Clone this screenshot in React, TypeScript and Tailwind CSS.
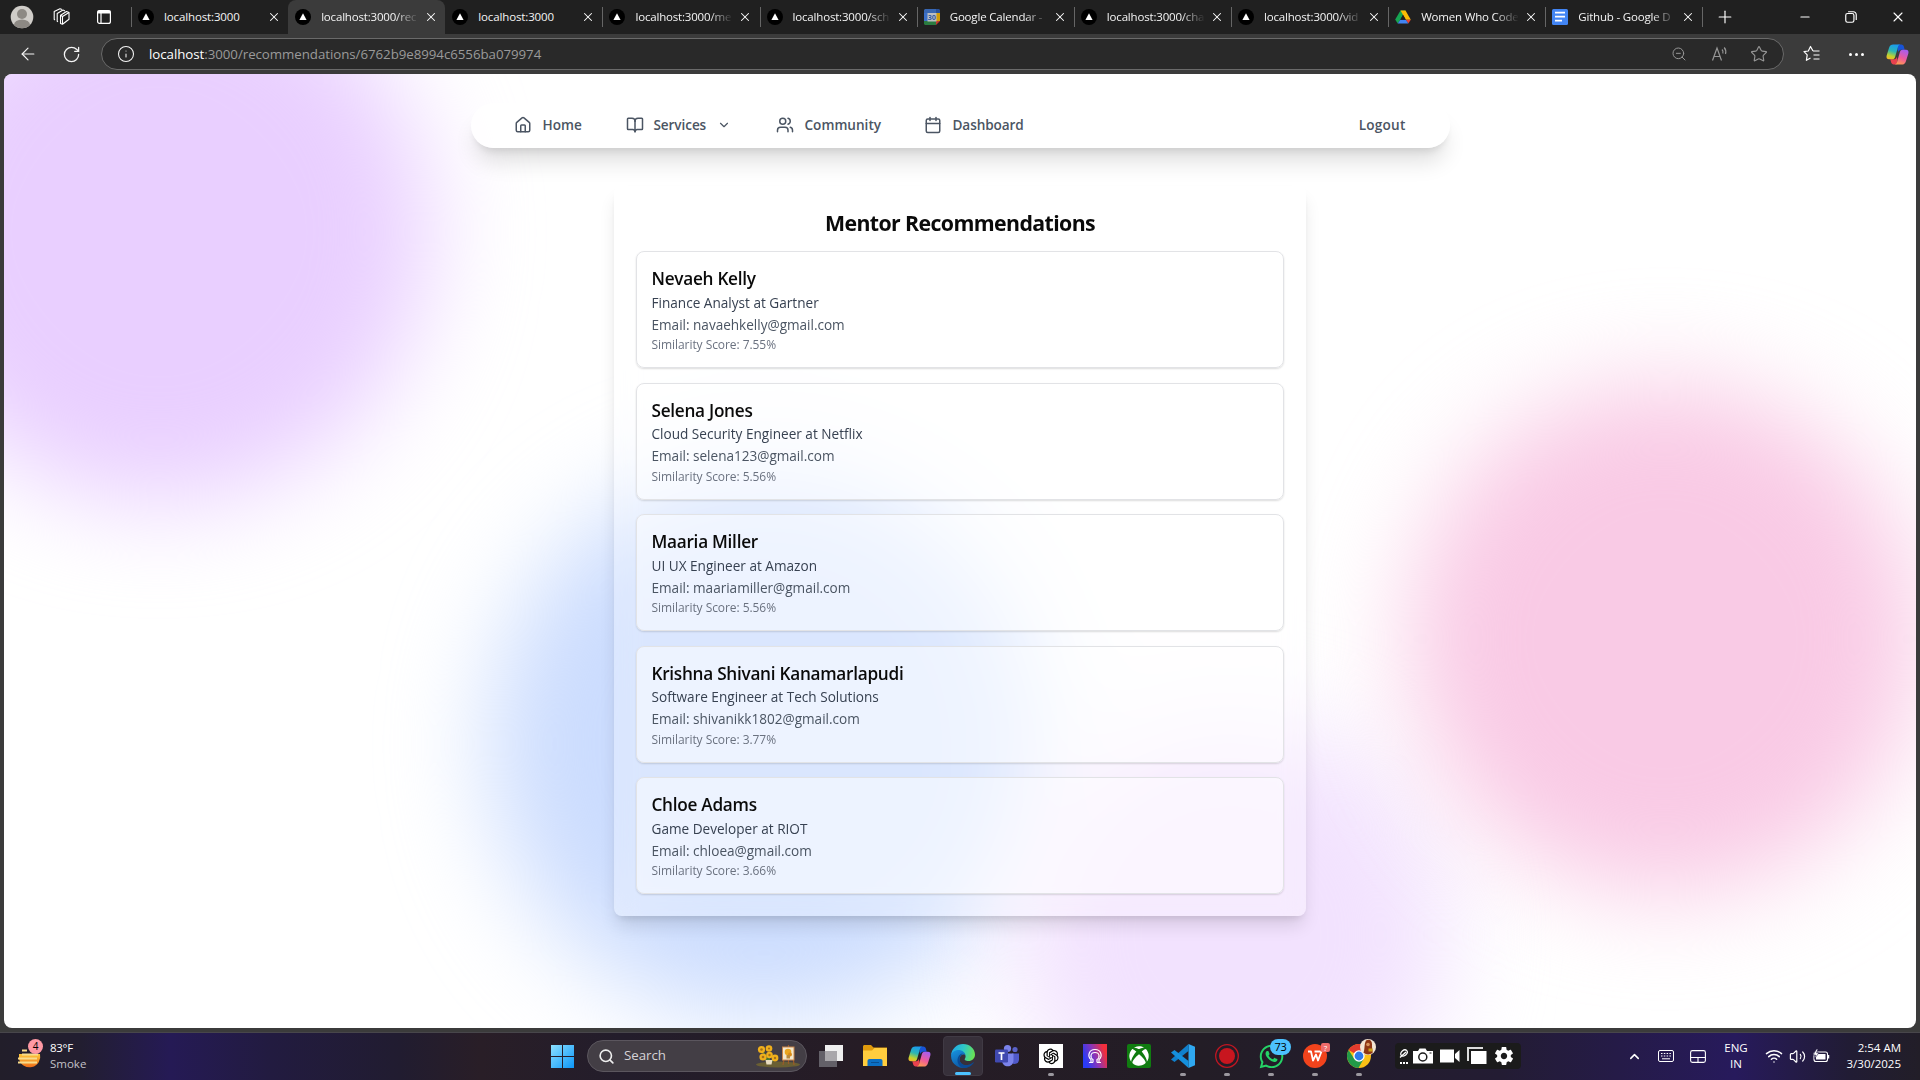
import React from "react";
import {
  House,
  BookOpen,
  ChevronDown,
  ChevronUp,
  Users,
  Calendar,
  ArrowLeft,
  RotateCw,
  Info,
  ZoomOut,
  Star,
  Search,
  X,
  Plus,
  Minus,
  Wifi,
  Volume2,
} from "lucide-react";
import { FaXbox, FaWhatsapp } from "react-icons/fa";
import { AiOutlineOpenAI } from "react-icons/ai";
import { IoMdSettings } from "react-icons/io";

type Favicon = "next" | "calendar" | "drive" | "docs";

const tabs: { title: string; icon: Favicon; active?: boolean; noLine?: boolean }[] = [
  { title: "localhost:3000", icon: "next" },
  { title: "localhost:3000/rec", icon: "next", active: true, noLine: true },
  { title: "localhost:3000", icon: "next", noLine: true },
  { title: "localhost:3000/me", icon: "next" },
  { title: "localhost:3000/sch", icon: "next" },
  { title: "Google Calendar -", icon: "calendar" },
  { title: "localhost:3000/cha", icon: "next" },
  { title: "localhost:3000/vid", icon: "next" },
  { title: "Women Who Code", icon: "drive" },
  { title: "Github - Google D", icon: "docs" },
];

const mentors = [
  { name: "Nevaeh Kelly", role: "Finance Analyst at Gartner", email: "navaehkelly@gmail.com", score: "7.55%" },
  { name: "Selena Jones", role: "Cloud Security Engineer at Netflix", email: "selena123@gmail.com", score: "5.56%" },
  { name: "Maaria Miller", role: "UI UX Engineer at Amazon", email: "maariamiller@gmail.com", score: "5.56%" },
  { name: "Krishna Shivani Kanamarlapudi", role: "Software Engineer at Tech Solutions", email: "shivanikk1802@gmail.com", score: "3.77%" },
  { name: "Chloe Adams", role: "Game Developer at RIOT", email: "chloea@gmail.com", score: "3.66%" },
];

function TabIcon({ kind }: { kind: Favicon }) {
  if (kind === "calendar")
    return (
      <svg viewBox="0 0 16 16" className="size-4 opacity-80">
        <path d="M1 0h11v4H0V1z" fill="#3f79d8" />
        <path d="M12 0h3l1 1v3h-4z" fill="#2a5db5" />
        <path d="M0 4h4v8H0z" fill="#4285f4" />
        <path d="M12 4h4v8h-4z" fill="#fbbc04" />
        <path d="M0 12h12v4H1l-1-1z" fill="#2d9249" />
        <path d="M12 12h4l-4 4z" fill="#ea4335" />
        <path d="M3.500 4h9v8.500h-9z" fill="#e4e6ea" />
        <text x="8" y="10.800" textAnchor="middle" fontSize="7" fontWeight="700" fill="#3267c8" fontFamily="Open Sans">30</text>
      </svg>
    );
  if (kind === "drive")
    return (
      <svg viewBox="0 0 16 16" className="size-4">
        <path d="M5.500 1.500h5L5.300 10.800 2.700 14.500.2 10.600z" fill="#16a552" />
        <path d="M5.500 1.500h5l5.300 9.200h-5z" fill="#fbbc04" />
        <path d="M15.800 10.700 13.300 14.500l-2.600-3.800z" fill="#ea4335" />
        <path d="M5.300 10.700h5.500l2.500 3.900H2.700z" fill="#4285f4" />
        <path d="M8 5.800 5.300 10.700h5.500z" fill="#202020" />
      </svg>
    );
  if (kind === "docs")
    return (
      <svg viewBox="0 0 16 16" className="size-4">
        <rect width="16" height="16" rx="1.500" fill="#4285f4" />
        <path d="M3 3.700h10M3 7.700h10M3 11.700h7" stroke="#fff" strokeWidth="1.700" />
      </svg>
    );
  return (
    <svg viewBox="0 0 16 16" className="size-4">
      <circle cx="8" cy="8" r="8" fill="#000" />
      <path d="M8 4.200 11.600 11H4.400z" fill="#fff" />
    </svg>
  );
}

function CopilotIcon({ className }: { className: string }) {
  return (
    <svg viewBox="0 0 24 24" className={className}>
      <defs>
        <linearGradient id="cpA" x1="0.600" y1="0" x2="0.300" y2="1">
          <stop offset="0" stopColor="#1a9af0" />
          <stop offset="0.450" stopColor="#2bb6b4" />
          <stop offset="0.800" stopColor="#c2d32c" />
          <stop offset="1" stopColor="#f3b62b" />
        </linearGradient>
        <linearGradient id="cpB" x1="0.700" y1="0" x2="0.300" y2="1">
          <stop offset="0" stopColor="#a65df0" />
          <stop offset="0.550" stopColor="#ee5a9a" />
          <stop offset="1" stopColor="#ff9a50" />
        </linearGradient>
      </defs>
      <path d="M13 1.500h3c1.500 0 2.300 1 2.700 2.300L19.500 7h-3c-2 0-3 .6-3.600 2.500L12 7z" fill="#1753d8" />
      <path d="M11 22.500H8c-1.500 0-2.300-1-2.700-2.300L4.500 17h3c2 0 3-.6 3.600-2.500L12 17z" fill="#e8414e" />
      <path d="M7.500 1.500H15c-1.300 0-2 1-2.500 2.600l-3 10.400C9 16.300 8 17 6.500 17H3.200C1 17 0 15.300.7 13L3.200 5C4 2.600 5.300 1.500 7.500 1.500z" fill="url(#cpA)" />
      <path d="M16.500 22.500H9c1.300 0 2-1 2.500-2.600l3-10.400C15 7.700 16 7 17.500 7h3.300c2.200 0 3.200 1.700 2.500 4l-2.500 8c-.8 2.400-2.100 3.500-4.300 3.500z" fill="url(#cpB)" />
    </svg>
  );
}

function BrowserTabs() {
  return (
    <div className="flex h-[34px] bg-[#202020] text-white">
      <div className="flex w-[131px] shrink-0 items-center">
        <svg viewBox="0 0 24 24" className="ml-[10px] size-6">
          <circle cx="12" cy="12" r="11.300" fill="#d0cdc9" />
          <circle cx="12" cy="9" r="5" fill="#8d8984" />
          <path d="M4 20a8 5.500 0 0 1 16 0 11.300 11.300 0 0 1-16 0z" fill="#8d8984" />
        </svg>
        <svg viewBox="0 0 18 18" className="ml-[19px] size-[18px]" fill="none" stroke="#fff" strokeWidth="1.100" strokeLinejoin="round">
          <path d="M8 7 13.500 3.500 16 4.500v6.800l-6.500 5L7.500 15.500V7.500z" />
          <path d="M5 13.800 4.200 13.300V5.500L10 2l2 .9M2 12 1.200 11.400v-8L7 .7l2 .9M9.500 16V8.500L16 4.500M7.500 7.300l2 1.200" />
        </svg>
        <svg viewBox="0 0 16 16" className="ml-[25px] size-4" fill="none" stroke="#fff" strokeWidth="1.200">
          <rect x="1.600" y="1.600" width="12.800" height="12.800" rx="2" />
          <path d="M1.600 3h12.800" strokeWidth="3" />
          <path d="M5 4v10" />
        </svg>
      </div>
      {tabs.map((t, i) => (
        <div
          key={i}
          className={
            t.active
              ? "flex w-[157.150px] shrink-0 items-center rounded-t-[8px] bg-[#3b3b3b]"
              : "flex w-[157.150px] shrink-0 items-center"
          }
        >
          <div className={t.noLine ? "h-5 w-px" : "h-5 w-px bg-[#666]"} />
          <div className="ml-[6px] shrink-0">
            <TabIcon kind={t.icon} />
          </div>
          <div
            className={
              t.title.length < 15 && t.icon === "next"
                ? "ml-[10px] w-[98px] shrink-0 font-['Open_Sans'] text-[11.500px] tracking-[-0.130px] whitespace-nowrap text-[#f4f4f4]"
                : "ml-[10px] w-[98px] shrink-0 font-['Open_Sans'] text-[11.500px] tracking-[-0.180px] whitespace-nowrap text-[#f4f4f4] [mask-image:linear-gradient(to_right,black_74px,transparent_98px)]"
            }
          >
            {t.title}
          </div>
          <X className="ml-[5px] size-[14px] shrink-0" strokeWidth={1.800} />
        </div>
      ))}
      <div className="h-5 w-px self-center bg-[#666]" />
      <Plus className="mt-[7px] ml-[12px] size-5" strokeWidth={1.400} />
      <div className="ml-auto flex items-center gap-[32px] pr-[14px]">
        <Minus className="size-[14px]" strokeWidth={2} />
        <svg viewBox="0 0 12 12" className="size-[14px]" fill="none" stroke="#fff">
          <rect x="1.500" y="3" width="7" height="7.500" rx="1.500" />
          <path d="M3.500 1.500H8A2.500 2.500 0 0 1 10.500 4v4.500" />
        </svg>
        <X className="size-[16px]" strokeWidth={1.600} />
      </div>
    </div>
  );
}

function AddressBar() {
  return (
    <div className="flex h-10 items-center bg-[#3b3b3b] text-[#f5f5f5]">
      <ArrowLeft className="ml-[18px] size-5" strokeWidth={1.400} />
      <RotateCw className="ml-[24px] size-[19px]" strokeWidth={1.600} />
      <div className="ml-[20px] flex h-8 w-[1683px] items-center rounded-full border border-[#6a6a6a] bg-[#292929] pr-[15px]">
        <Info className="ml-[15px] size-[18px]" strokeWidth={1.400} />
        <div className="ml-[14px] pt-px font-['Open_Sans'] text-[13.3px] tracking-[-0.050px] text-[#9a9a9a]">
          <span className="text-white">localhost</span>:3000/recommendations/6762b9e8994c6556ba079974
        </div>
        <ZoomOut className="ml-auto size-4 text-[#969696]" strokeWidth={1.500} />
        <svg viewBox="0 0 18 18" className="ml-[24px] size-[18px]" fill="none" stroke="#969696" strokeWidth="1.200">
          <path d="M1.500 15.500 6 3l4.500 12.500M3 11.500h6M11 4.500a4 4 0 0 1 .8 4M13.200 2.500a7 7 0 0 1 1.300 6.500" />
        </svg>
        <Star className="ml-[21px] size-[18px] text-[#969696]" strokeWidth={1.500} />
      </div>
      <svg viewBox="0 0 18 18" className="ml-[19px] size-[18px]" fill="none" stroke="#fff" strokeWidth="1.200" strokeLinejoin="round">
        <path d="M10 6 7.500 1.500 5.300 6 1 6.600l3.200 3.200-.8 5.500L7.500 13M10 6h6.500M10.500 10h6M10.500 14h6" />
      </svg>
      <div className="ml-[28px] flex gap-[3px]">
        <i className="size-[3px] rounded-full bg-white" />
        <i className="size-[3px] rounded-full bg-white" />
        <i className="size-[3px] rounded-full bg-white" />
      </div>
      <CopilotIcon className="ml-[22px] size-[23px]" />
    </div>
  );
}

function NavBar() {
  return (
    <nav className="mx-auto flex h-[45px] w-[979px] items-center rounded-full bg-white/80 pr-[44px] pl-[43px] font-['Open_Sans'] text-[13.600px] font-semibold text-[#4b5563] shadow-[0_18px_22px_-4px_rgba(0,0,0,0.12),0_7px_9px_-5px_rgba(0,0,0,0.12)]">
      <div className="flex w-[112px] items-center">
        <House className="size-[18px]" />
        <span className="ml-[11px]">Home</span>
      </div>
      <div className="flex w-[150px] items-center">
        <BookOpen className="size-[18px]" />
        <span className="ml-[10px] tracking-[-0.100px]">Services</span>
        <ChevronDown className="ml-[11px] size-[14px]" />
      </div>
      <div className="flex w-[148px] items-center">
        <Users className="size-[18px]" />
        <span className="ml-[11px]">Community</span>
      </div>
      <div className="flex items-center">
        <Calendar className="size-[18px]" />
        <span className="ml-[11px] tracking-[-0.100px]">Dashboard</span>
      </div>
      <span className="ml-auto tracking-[0.200px]">Logout</span>
    </nav>
  );
}

function Page() {
  return (
    <main className="relative mx-1 h-[954px] overflow-hidden rounded-[8px] bg-white">
      <div className="absolute top-[-112px] left-[-115px] size-[540px] rounded-full bg-[#e9cfff] blur-[50px]" />
      <div className="absolute top-[396px] left-[486px] size-[548px] rounded-full bg-[#cbdcfe] blur-[50px]" />
      <div className="absolute top-[646px] left-[1012px] size-[430px] rounded-full bg-[#f2e2fe] blur-[50px]" />
      <div className="absolute top-[310px] left-[1406px] size-[510px] rounded-full bg-[#f9cae5] blur-[50px]" />
      <div className="relative pt-[29px]">
        <NavBar />
        <section className="mx-auto mt-[38px] w-[692px] rounded-[8px] bg-white/30 px-[22px] pt-[22px] pb-[22px] shadow-[0_12px_18px_-3px_rgba(0,0,0,0.12),0_5px_8px_-4px_rgba(0,0,0,0.12)] backdrop-blur-md">
          <h1 className="mb-[14px] text-center font-['Open_Sans'] text-[21.300px] leading-[29px] font-bold tracking-[-0.600px] text-[#0a0a0a]">
            Mentor Recommendations
          </h1>
          <ul className="flex flex-col gap-[14.500px]">
            {mentors.map((m) => (
              <li
                key={m.name}
                className="h-[117px] rounded-[8px] border border-[#e2e3e6] bg-white/50 px-[14.500px] pt-[14px] font-['Open_Sans'] shadow-[0_1px_2px_rgba(0,0,0,0.14)]"
              >
                <div className="text-[17.200px] leading-[25.500px] font-semibold tracking-[-0.270px] text-[#0a0a0a]">{m.name}</div>
                <div className="text-[13.600px] leading-[22px] text-[#374151]">{m.role}</div>
                <div className="text-[13.600px] leading-[21.500px] tracking-[-0.020px] text-[#4b5563]">Email: {m.email}</div>
                <div className="text-[12px] leading-[19.500px] tracking-[-0.060px] text-[#6b7280]">Similarity Score: {m.score}</div>
              </li>
            ))}
          </ul>
        </section>
      </div>
    </main>
  );
}

function AppSlot({ children, running }: { children: React.ReactNode; running?: boolean }) {
  return (
    <div className="relative flex h-10 w-11 shrink-0 items-center justify-center">
      {children}
      {running && <span className="absolute bottom-0 left-[19px] h-[3px] w-[6px] rounded-full bg-[#9b989f]" />}
    </div>
  );
}

function Taskbar() {
  return (
    <footer className="flex h-[47px] items-center bg-[linear-gradient(90deg,#221e2a_0px,#221e30_80px,#251a55_170px,#221b40_270px,#211c30_400px,#291e27_480px,#231d2b_620px,#261c25_860px,#231d26_1200px,#231c33_1500px,#271a5c_1735px,#211c34_1850px,#221e28_1920px)] pb-px font-['Open_Sans'] text-white">
      <div className="flex w-[551px] items-center pl-[17px]">
        <div className="relative size-[28px]">
          <svg viewBox="0 0 28 28" className="size-[28px]">
            <defs>
              <linearGradient id="sun" x1="0" y1="0" x2="0" y2="1">
                <stop offset="0" stopColor="#fdc83c" />
                <stop offset="1" stopColor="#ee6c18" />
              </linearGradient>
            </defs>
            <path d="M2 12h21a10.500 10.500 0 0 1-21 5z" fill="url(#sun)" />
            <path d="M5 8.500h5M5 12.500h16M1 16.500h19M1 20.500h19" stroke="#f8dc8c" strokeWidth="2" />
          </svg>
          <span className="absolute -top-[3px] left-[11px] flex size-[15px] items-center justify-center rounded-full bg-[#ff99a4] text-[10px] text-black">4</span>
        </div>
        <div className="ml-[5px] text-[11.500px] leading-[16px]">
          <div className="tracking-[-0.300px]">83°F</div>
          <div className="text-[#c3c1c8]">Smoke</div>
        </div>
      </div>
      <svg viewBox="0 0 23 23" className="size-[23px] shrink-0">
        <defs>
          <linearGradient id="win" x1="0" y1="0" x2="1" y2="1">
            <stop offset="0" stopColor="#8ce0ff" />
            <stop offset="1" stopColor="#0c96f8" />
          </linearGradient>
        </defs>
        <path d="M0 0h11v11H0zM12 0h11v11H12zM0 12h11v11H0zM12 12h11v11H12z" fill="url(#win)" />
      </svg>
      <div className="ml-[13px] flex h-8 w-[220px] shrink-0 items-center rounded-full border border-[#5b565e] bg-[#433e45]">
        <Search className="ml-[10px] size-[17px] text-[#eeeeee]" strokeWidth={2.300} />
        <span className="ml-[9px] text-[13.300px] tracking-[-0.050px] text-[#d5d2d6]">Search</span>
        <svg viewBox="0 0 44 24" className="ml-auto mr-[6px] h-6 w-11">
          <ellipse cx="22" cy="20.500" rx="22" ry="3" fill="#6a5f33" />
          <path d="M13 19 6 6M13 19V8M13 19l7-5M13 17 6 13" stroke="#4c7a34" strokeWidth="2" />
          <g fill="#f0b01c">
            <circle cx="5.500" cy="5.500" r="3.600" />
            <circle cx="13" cy="4.500" r="3.300" />
            <circle cx="7" cy="13" r="3.600" />
            <circle cx="13.500" cy="11" r="3.300" />
            <circle cx="19" cy="14" r="3.400" />
          </g>
          <g fill="#a5701a">
            <circle cx="5.500" cy="5.500" r="1.300" />
            <circle cx="13" cy="4.500" r="1.100" />
            <circle cx="7" cy="13" r="1.300" />
            <circle cx="13.500" cy="11" r="1.200" />
            <circle cx="19" cy="14" r="1.200" />
          </g>
          <path d="M9.500 16h7l-1 4.500h-5z" fill="#e8dcc0" />
          <path d="M27 21 30 4M38 21 36 4M32.500 1v19" stroke="#9a5a2a" strokeWidth="1.200" />
          <path d="M26 2.500h12.500v14H26z" fill="#c9854a" />
          <path d="M27 3.500h10.500v12H27z" fill="#f4e8cc" />
          <circle cx="32" cy="8" r="3.300" fill="#e9a51e" />
          <circle cx="34" cy="10.500" r="2" fill="#d98a18" />
          <path d="M30.500 11h3.500v3.500h-3.500z" fill="#b8893a" />
        </svg>
      </div>
      <div className="ml-[2px] flex">
        <AppSlot>
          <svg viewBox="0 0 24 24" className="size-6">
            <path d="M6 1h18v16H6z" fill="#efefef" />
            <path d="M0 7h18v16H0z" fill="#636068" />
            <path d="M6 7h12v10H6z" fill="#a9a7ab" />
          </svg>
        </AppSlot>
        <AppSlot>
          <svg viewBox="0 0 24 24" className="size-6">
            <path d="M0 2.500C0 1.700.7 1 1.500 1H8l2.500 2.500H24V8H0z" fill="#e09a0c" />
            <path d="M0 6.500h9L11.500 4H24v18H0z" fill="#ffcd3e" />
            <path d="M4.500 22v-5c0-1.200.8-2 2-2h11c1.200 0 2 .8 2 2v5z" fill="#0b6fc4" />
            <path d="M8 18.500h8" stroke="#084f93" />
          </svg>
        </AppSlot>
        <AppSlot>
          <CopilotIcon className="size-[23px]" />
        </AppSlot>
        <div className="relative mx-[2px] flex size-10 items-center justify-center rounded-[4px] border border-[#403a44] bg-[#37303a]">
          <svg viewBox="0 0 24 24" className="size-6">
            <defs>
              <linearGradient id="edA" x1="0" y1="0.300" x2="1" y2="0.500">
                <stop offset="0" stopColor="#1fa7e8" />
                <stop offset="0.500" stopColor="#2fc9c6" />
                <stop offset="1" stopColor="#6ae352" />
              </linearGradient>
              <linearGradient id="edB" x1="0" y1="0" x2="0.500" y2="1">
                <stop offset="0" stopColor="#1893e0" />
                <stop offset="1" stopColor="#0c59a4" />
              </linearGradient>
            </defs>
            <path d="M.1 11A12 12 0 0 1 12 0c7 0 12 5 12 10.500 0 4-3 6.500-6.500 6.500-3 0-4.500-1-3.500-2.500.8-1.200.8-2.500 0-4C12.500 7.500 4 6 .1 11z" fill="url(#edA)" />
            <path d="M.1 11C1 7.500 4.500 6 7.500 6c3.500 0 6.500 2.200 7 5-3-1.500-6 1-6 4.500 0 4.500 5 7 9.500 6.800A12 12 0 0 1 .1 11z" fill="url(#edB)" />
            <path d="M8.500 15c0 4 4 6.500 8 6 2.500-.3 4.500-1.500 5.500-2.500.6-.5 1 0 .6.600A12 12 0 0 1 12 24C7 22 5.500 17.500 7 13.500c1-2.500 3-4 5-4-2 1.300-3.500 3-3.500 5.500z" fill="#0b4a94" />
          </svg>
          <span className="absolute bottom-0 left-[11px] h-[3px] w-4 rounded-full bg-[#4cc2ff]" />
        </div>
        <AppSlot>
          <svg viewBox="0 0 24 24" className="size-6">
            <circle cx="12.500" cy="4.500" r="3.600" fill="#7b83eb" />
            <circle cx="20" cy="5.500" r="2.600" fill="#5a62c8" />
            <path d="M17 9.500h7v6c0 3-2 4.500-4.500 4.500S16 18 16 16z" fill="#5059c9" />
            <path d="M7 9.500h11.500v6.500c0 4-2.500 6.300-5.700 6.300S7 20 7 16.500z" fill="#7b83eb" />
            <rect x="0" y="5.500" width="13" height="13" rx="1.200" fill="#4049b0" />
            <path d="M3.500 9h6M6.500 9v7" stroke="#fff" strokeWidth="1.700" />
          </svg>
        </AppSlot>
        <AppSlot running>
          <div className="flex size-6 items-center justify-center bg-white text-black">
            <AiOutlineOpenAI className="size-[20px]" />
          </div>
        </AppSlot>
        <AppSlot>
          <div className="flex size-6 items-center justify-center bg-[linear-gradient(70deg,#2a3bf5_15%,#8a35b8_50%,#f22f3c_85%)]">
            <svg viewBox="0 0 16 16" className="size-4" fill="none" stroke="#fff" strokeWidth="1.200">
              <path d="M2 14.500h4M14 14.500h-4M6 14.500v-3c-3-1.500-3-7 2-7s5 5.500 2 7v3" />
              <path d="M4 14V11.500C0 8 2 1.500 8 1.500S16 8 12 11.500V14" />
            </svg>
          </div>
        </AppSlot>
        <AppSlot>
          <div className="flex size-6 items-center justify-center rounded-[2px] bg-[#107c10]">
            <FaXbox className="size-[20px]" />
          </div>
        </AppSlot>
        <AppSlot running>
          <svg viewBox="0 0 24 24" className="size-6">
            <path d="M17.500 0 24 2.800v18.400L17.500 24z" fill="#2fa8f0" />
            <path d="M17.500 0v7L3.500 18 0 15.500z" fill="#1080cc" />
            <path d="M17.500 24v-7L3.500 6 0 8.500z" fill="#1590dd" />
          </svg>
        </AppSlot>
        <AppSlot running>
          <svg viewBox="0 0 24 24" className="size-6">
            <circle cx="12" cy="12" r="11.300" fill="none" stroke="#c01622" strokeWidth="1.300" />
            <circle cx="12" cy="12" r="8" fill="#c8161f" />
          </svg>
        </AppSlot>
        <AppSlot running>
          <FaWhatsapp className="size-[27px] text-[#25d366]" />
          <span className="absolute top-[3px] left-[21px] flex h-4 w-[21px] items-center justify-center rounded-full bg-[#4cc2ff] text-[11px] tracking-[-0.400px] text-black">73</span>
        </AppSlot>
        <AppSlot running>
          <svg viewBox="0 0 24 24" className="size-6">
            <circle cx="12" cy="12" r="12" fill="#f2431c" />
            <path d="M5 7.500h3l2 9 3-6 2 6 3.500-9M11.500 7.500h6" fill="none" stroke="#fff" strokeWidth="1.800" strokeLinejoin="round" />
          </svg>
          <span className="absolute top-[7px] left-[28px] flex size-[9px] items-center justify-center rounded-[2px] bg-[#ef6b6b] text-[8px] text-white">?</span>
        </AppSlot>
        <AppSlot running>
          <svg viewBox="0 0 24 24" className="size-6">
            <circle cx="12" cy="12" r="12" fill="#fbc116" />
            <path d="M12 12 1.600 6A12 12 0 0 1 22.400 6z" fill="#e33b2e" />
            <path d="M1.600 6A12 12 0 0 0 11.500 24l5.200-9.300L7 14.500z" fill="#229a48" />
            <circle cx="12" cy="12" r="5.700" fill="#fff" />
            <circle cx="12" cy="12" r="4.400" fill="#2d7bea" />
          </svg>
          <svg viewBox="0 0 16 16" className="absolute top-[3px] left-[23px] size-4">
            <circle cx="8" cy="8" r="8" fill="#f3e6d4" />
            <path d="M6 1.500c3.500-2 6.500 0 6 5 0 4 1 6 .5 7.500a8 8 0 0 1-9-.2C5 10 4 5 6 1.500z" fill="#8e3614" />
            <circle cx="8" cy="5.500" r="1.800" fill="#d9935c" />
            <path d="M8.500 9.500h4v3h-4z" fill="#caa018" />
          </svg>
        </AppSlot>
      </div>
      <div className="ml-[14px] flex h-[26px] w-[126px] shrink-0 items-center rounded-[4px] bg-[#1b1b1b]">
        <div className="ml-[4px] flex w-[10px] flex-col items-center gap-[4px]">
          <svg viewBox="0 0 10 9" className="h-[9px] w-[10px]" fill="none" stroke="#fff" strokeWidth="1.300">
            <ellipse cx="5" cy="4" rx="3.600" ry="2.600" transform="rotate(-40 5 4)" />
            <path d="M1 8.500 7 3" />
          </svg>
          <div className="flex gap-[1px]">
            <i className="size-[2px] bg-white" />
            <i className="size-[2px] bg-white" />
            <i className="size-[2px] bg-white" />
          </div>
        </div>
        <svg viewBox="0 0 20 16" className="ml-[4px] h-4 w-5">
          <path d="M0 3h5l1.500-2.500h6L14 3h6v12.500H0z" fill="#fff" />
          <circle cx="9.800" cy="9" r="4" fill="none" stroke="#1b1b1b" strokeWidth="1.500" />
          <path d="M16.500 5h2" stroke="#1b1b1b" />
        </svg>
        <svg viewBox="0 0 20 14" className="ml-[7px] h-[14px] w-5">
          <path d="M0 .5h14v13H0zM15 5l4.500-4v12L15 9z" fill="#fff" />
        </svg>
        <svg viewBox="0 0 20 18" className="ml-[7px] h-[18px] w-5">
          <path d="M1 14V1h15" stroke="#dcdcdc" strokeWidth="2" fill="none" />
          <path d="M4 4h15.500v13H4z" fill="#fff" />
        </svg>
        <IoMdSettings className="ml-[6px] size-[22px]" />
      </div>
      <div className="ml-auto flex items-center pr-[19px]">
        <ChevronUp className="size-[15px]" strokeWidth={2.400} />
        <svg viewBox="0 0 16 12" className="ml-[16px] h-3 w-4" fill="none" stroke="#fff">
          <rect x="0.500" y="0.500" width="15" height="11" rx="1.500" />
          <path d="M3 3.500h10M3 6h10" strokeDasharray="1.500 1.300" strokeWidth="1.200" />
          <path d="M4 8.800h8" />
        </svg>
        <svg viewBox="0 0 16 13" className="ml-[16px] h-[13px] w-4" fill="none" stroke="#fff" strokeWidth="1.100">
          <rect x="0.600" y="0.600" width="14.800" height="11.800" rx="1.800" />
          <path d="M.6 7.500h14.800M8 7.500v5" />
        </svg>
        <div className="ml-[18px] w-[24px] text-center text-[11.500px] leading-[16px]">
          <div>ENG</div>
          <div>IN</div>
        </div>
        <Wifi className="ml-[17px] size-[18px]" strokeWidth={2} />
        <Volume2 className="ml-[6px] size-[17px]" strokeWidth={1.700} />
        <svg viewBox="0 0 17 14" className="ml-[7px] h-[14px] w-[17px]">
          <rect x="1" y="3" width="13.500" height="9.500" rx="2" fill="none" stroke="#fff" strokeWidth="1.100" />
          <rect x="3" y="5" width="9.500" height="5.500" fill="#fff" />
          <path d="M15.500 6v3.500" stroke="#fff" strokeWidth="1.500" />
          <path d="M3.500 0 0 6h2.500L1.500 9.500 6 3.800H3.600L5 0z" fill="#fff" stroke="#241b45" strokeWidth="0.600" />
        </svg>
        <div className="ml-[15px] w-[56px] text-right text-[11.500px] leading-[16px] whitespace-nowrap">
          <div>2:54 AM</div>
          <div>3/30/2025</div>
        </div>
      </div>
    </footer>
  );
}

export default function App() {
  return (
    <div className="h-[1080px] w-[1920px] overflow-hidden bg-[#3b3b3b]">
      <BrowserTabs />
      <AddressBar />
      <Page />
      <div className="h-[5px] border-b border-[#48464b] bg-[#3b3b3b]" />
      <Taskbar />
    </div>
  );
}
